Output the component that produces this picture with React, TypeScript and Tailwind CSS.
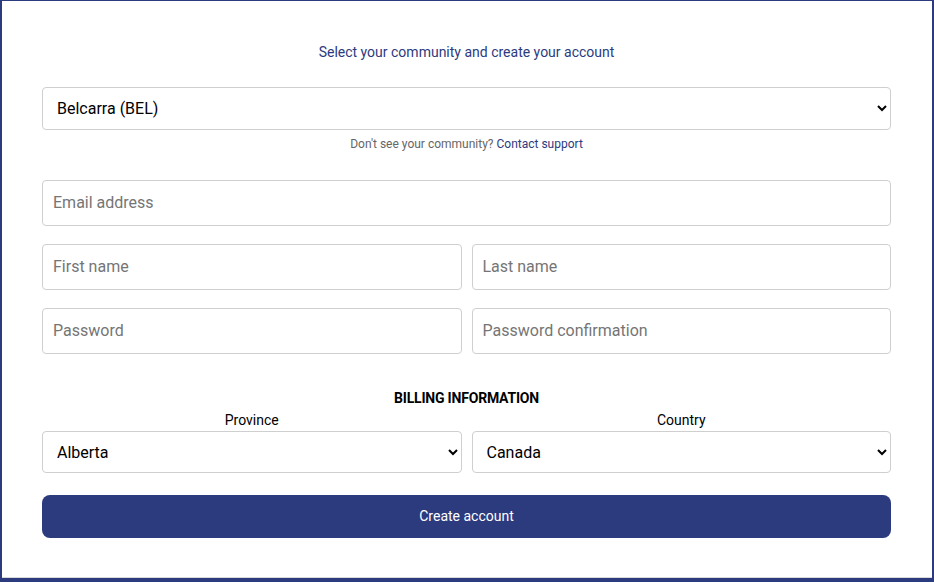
import React, { useState } from 'react';

const fieldBase =
  'w-full bg-white border border-[#cfcfcf] rounded-[4px] outline-none text-[16px] text-[#212529] font-[Roboto,sans-serif]';

export default function App() {
  const [community, setCommunity] = useState('BEL');
  const [province, setProvince] = useState('AB');
  const [country, setCountry] = useState('CA');

  return (
    <div className="w-[934px] h-[582px] bg-[#2c3a7e] pt-px px-[2px] overflow-hidden font-[Roboto,sans-serif]">
      <div className="h-[577px] bg-white border-b border-[#d9d9d9] pl-[40px] pr-[41px] pt-[41px]">
        {/* Heading */}
        <p className="text-center text-[14px] leading-[20px] text-[#2c3a7e]">
          Select your community and create your account
        </p>

        {/* Community picker */}
        <select
          value={community}
          onChange={(e) => setCommunity(e.target.value)}
          className={`${fieldBase} mt-[25px] h-[43px] pl-[10px] pr-[6px] text-black`}
        >
          <option value="BEL">Belcarra (BEL)</option>
          <option value="VAN">Vancouver (VAN)</option>
        </select>
        <p className="mt-[6px] text-center text-[12px] leading-[16px] text-[#666666]">
          Don't see your community?{' '}
          <a href="#" className="text-[#2c3a7e]">Contact support</a>
        </p>

        {/* Account fields */}
        <div className="mt-[28px] flex flex-col gap-[18px]">
          <input type="email" placeholder="Email address" className={`${fieldBase} h-[46px] px-[10px] pb-px placeholder:text-[#757575]`} />
          <div className="grid grid-cols-2 gap-[10px]">
            <input type="text" placeholder="First name" className={`${fieldBase} h-[46px] px-[10px] pb-px placeholder:text-[#757575]`} />
            <input type="text" placeholder="Last name" className={`${fieldBase} h-[46px] px-[10px] pb-px placeholder:text-[#757575]`} />
          </div>
          <div className="grid grid-cols-2 gap-[10px]">
            <input type="password" placeholder="Password" className={`${fieldBase} h-[46px] px-[10px] pb-px placeholder:text-[#757575]`} />
            <input type="password" placeholder="Password confirmation" className={`${fieldBase} h-[46px] px-[10px] pb-px placeholder:text-[#757575]`} />
          </div>
        </div>

        {/* Billing */}
        <h3 className="mt-[34px] text-center text-[14px] leading-[20px] font-bold text-black tracking-[-0.2px]">
          BILLING INFORMATION
        </h3>
        <div className="mt-[2px] grid grid-cols-2 gap-[10px]">
          <div>
            <label className="block text-center text-[14px] leading-[21px] text-black">Province</label>
            <select
              value={province}
              onChange={(e) => setProvince(e.target.value)}
              className={`${fieldBase} h-[42px] pl-[10px] pr-[6px] text-black`}
            >
              <option value="AB">Alberta</option>
              <option value="BC">British Columbia</option>
            </select>
          </div>
          <div>
            <label className="block text-center text-[14px] leading-[21px] text-black">Country</label>
            <select
              value={country}
              onChange={(e) => setCountry(e.target.value)}
              className={`${fieldBase} h-[42px] pl-[10px] pr-[6px] text-black`}
            >
              <option value="CA">Canada</option>
              <option value="US">United States</option>
            </select>
          </div>
        </div>

        <button
          type="button"
          className="mt-[22px] w-full h-[43px] rounded-[8px] bg-[#2c3a7e] text-white text-[14px]"
        >
          Create account
        </button>
      </div>
    </div>
  );
}
